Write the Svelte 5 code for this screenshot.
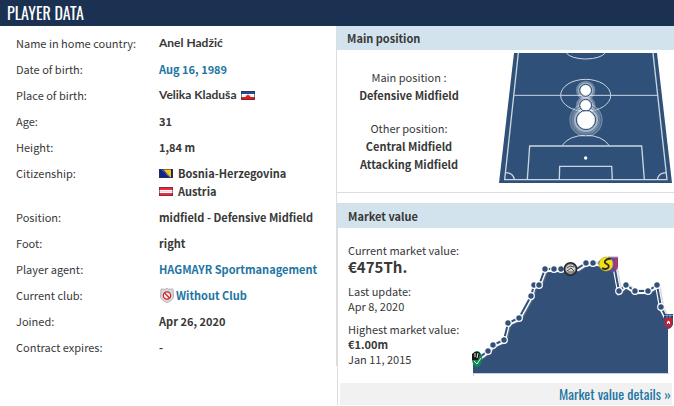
<script lang="ts">
	type Flag = 'yugoslavia' | 'bosnia' | 'austria';

	interface Value {
		text: string;
		href?: string;
		flag?: Flag;
		flagAfter?: boolean;
		noClub?: boolean;
		accented?: boolean;
	}

	const rows: { label: string; values: Value[] }[] = [
		{ label: 'Name in home country:', values: [{ text: 'Anel Hadžić', accented: true }] },
		{ label: 'Date of birth:', values: [{ text: 'Aug 16, 1989', href: '#birthday' }] },
		{ label: 'Place of birth:', values: [{ text: 'Velika Kladuša', flag: 'yugoslavia', flagAfter: true, accented: true }] },
		{ label: 'Age:', values: [{ text: '31' }] },
		{ label: 'Height:', values: [{ text: '1,84 m' }] },
		{
			label: 'Citizenship:',
			values: [
				{ text: 'Bosnia-Herzegovina', flag: 'bosnia' },
				{ text: 'Austria', flag: 'austria' }
			]
		},
		{ label: 'Position:', values: [{ text: 'midfield - Defensive Midfield' }] },
		{ label: 'Foot:', values: [{ text: 'right' }] },
		{ label: 'Player agent:', values: [{ text: 'HAGMAYR Sportmanagement', href: '#agent' }] },
		{ label: 'Current club:', values: [{ text: 'Without Club', href: '#club', noClub: true }] },
		{ label: 'Joined:', values: [{ text: 'Apr 26, 2020' }] },
		{ label: 'Contract expires:', values: [{ text: '-' }] }
	];

	// Market value history, in chart units; club marks a transfer
	const history: { x: number; y: number; club?: boolean }[] = [
		{ x: 5, y: 105, club: true },
		{ x: 16, y: 97 },
		{ x: 21, y: 91 },
		{ x: 32, y: 86 },
		{ x: 36, y: 69 },
		{ x: 47, y: 64 },
		{ x: 59, y: 42 },
		{ x: 62, y: 31 },
		{ x: 67, y: 31 },
		{ x: 73, y: 15 },
		{ x: 82, y: 15 },
		{ x: 89, y: 15 },
		{ x: 98, y: 15, club: true },
		{ x: 106, y: 14 },
		{ x: 114, y: 9 },
		{ x: 121, y: 9 },
		{ x: 129, y: 9 },
		{ x: 134, y: 10, club: true },
		{ x: 142, y: 10, club: true },
		{ x: 147, y: 37 },
		{ x: 154, y: 31 },
		{ x: 163, y: 37 },
		{ x: 176, y: 37 },
		{ x: 185, y: 31 },
		{ x: 189, y: 53 },
		{ x: 196, y: 67, club: true }
	];

	const line = history.map((p) => `${p.x},${p.y}`).join(' ');
	const area = `1,119 1,107 ${line} 196,119`;
	const dots = history.filter((p) => !p.club && p.x !== 106);
</script>

{#snippet flagIcon(flag: Flag)}
	<svg class="flag" viewBox="0 0 14 9" aria-hidden="true">
		{#if flag === 'yugoslavia'}
			<rect width="14" height="9" fill="#fff" />
			<rect width="14" height="3" fill="#1c4ba0" />
			<rect y="6" width="14" height="3" fill="#e01c1c" />
			<path d="M7 3l.8 1.500 2 .3-1.300 1.400H5.500L4.200 4.800l2-.3z" fill="#e01c1c" />
		{:else if flag === 'bosnia'}
			<rect width="14" height="9" fill="#10258c" />
			<path d="M4 0h8v9z" fill="#f7c90e" />
			<path d="M2.500 0l9 9" stroke="#b9c2e6" stroke-width="1" stroke-dasharray="1 .8" />
		{:else}
			<rect width="14" height="9" fill="#ee2b40" />
			<rect y="3" width="14" height="3" fill="#fff" />
			<path d="M1 4.500h12" stroke="#f6b5bd" stroke-width=".6" />
		{/if}
		<rect x=".5" y=".5" width="13" height="8" fill="none" stroke="#333" stroke-opacity=".6" />
	</svg>
{/snippet}

<section class="player">
	<h1>Player data</h1>
	<div class="columns">
		<div class="facts">
			<table>
				<tbody>
					{#each rows as row}
						<tr>
							<th scope="row">{row.label}</th>
							<td>
								{#each row.values as value}
									<div class="value">
										{#if value.flag && !value.flagAfter}{@render flagIcon(value.flag)}{/if}
										{#if value.noClub}
											<svg class="shield" viewBox="0 0 14 15" aria-hidden="true">
												<path d="M7 .5l2 .8 4-.3.500 7C13.500 11.500 10 13.500 7 14.500 4 13.500.500 11.500.500 8L1 1l4 .3z" fill="#d9d9d9" stroke="#b5b5b5" />
												<circle cx="7" cy="7.500" r="3.700" fill="#eee" stroke="#d9202a" stroke-width="1.300" />
												<path d="M4.500 5l5 5" stroke="#d9202a" stroke-width="1.300" />
											</svg>
										{/if}
										{#if value.href}
											<a href={value.href}>{value.text}</a>
										{:else}
											<span class:accented={value.accented}>{value.text}</span>
										{/if}
										{#if value.flag && value.flagAfter}{@render flagIcon(value.flag)}{/if}
									</div>
								{/each}
							</td>
						</tr>
					{/each}
				</tbody>
			</table>
		</div>

		<div class="side">
			<section class="position">
				<h2>Main position</h2>
				<div class="position-body">
					<div class="position-list">
						<p>Main position :<br /><strong>Defensive Midfield</strong></p>
						<p>Other position:<br /><strong>Central Midfield</strong><br /><strong>Attacking Midfield</strong></p>
					</div>
					<svg class="pitch" viewBox="12 24 519 390" role="img" aria-label="Positions on the pitch">
						<path d="M57 24H486L531 414H12z" fill="#2f5078" />
						<g fill="none" stroke="#cbd6e0" stroke-width="4">
							<path d="M70 24L29 404H516L474 24" />
							<path d="M58 151H486" stroke-width="3" />
							<ellipse cx="272" cy="151" rx="75" ry="48" stroke-width="3" />
							<path d="M214 24Q228 41 272 42Q316 41 331 24" stroke-width="3" />
							<path d="M97 403L104 303H440L448 403" />
							<path d="M193 403L194 364H350L352 403" />
							<path d="M201 302Q222 271 272 271Q322 271 343 302" stroke-width="3" />
							<path d="M31 383Q54 383 58 403M514 383Q491 383 487 403" />
						</g>
						<circle cx="272" cy="339" r="5" fill="#fff" />
						<g fill="#fff">
							<g fill-opacity=".32">
								<circle cx="272" cy="136" r="29" />
								<circle cx="272" cy="181" r="29" />
								<circle cx="273" cy="225" r="50" />
							</g>
							<g fill-opacity=".4">
								<circle cx="272" cy="136" r="23" />
								<circle cx="272" cy="181" r="23" />
								<circle cx="273" cy="225" r="39" />
							</g>
							<g fill="none" stroke="#2f5078" stroke-width="3">
								<circle cx="273" cy="225" r="45" stroke-opacity=".6" />
								<circle cx="273" cy="225" r="38" stroke-opacity=".6" />
								<circle cx="272" cy="136" r="18" />
								<circle cx="272" cy="181" r="18" />
								<circle cx="273" cy="225" r="29" />
							</g>
							<circle cx="272" cy="136" r="15" />
							<circle cx="272" cy="181" r="15" />
							<circle cx="273" cy="225" r="26" />
						</g>
					</svg>
				</div>
			</section>

			<section class="market">
				<h2>Market value</h2>
				<div class="market-body">
					<div class="market-text">
						<p>Current market value:<strong class="current">€475Th.</strong></p>
						<p>Last update:<br />Apr 8, 2020</p>
						<p>Highest market value:<br /><strong>€1.00m</strong><br />Jan 11, 2015</p>
					</div>
					<svg class="chart" viewBox="0 0 202 124" role="img" aria-label="Market value history">
						<polygon points={area} fill="#325078" />
						<path d="M1.500 122V119.500H197" fill="none" stroke="#c0d0e0" />
						<polyline points={line} fill="none" stroke="#999" stroke-opacity=".35" stroke-width="5" transform="translate(1 1)" />
						<polyline points={line} fill="none" stroke="#fff" stroke-width="4" transform="translate(0 1)" />
						<polyline points={line} fill="none" stroke="#325078" stroke-width="2" />
						{#each dots as p}
							<circle cx={p.x} cy={p.y} r="3.300" fill="#325078" stroke="#fff" stroke-width="1.200" />
						{/each}
						<!-- Club crests -->
						<g>
							<ellipse cx="5" cy="105" rx="5" ry="8" fill="#0c8b55" />
							<path d="M0 106V100Q4 96 8 99L6 106z" fill="#171717" />
							<path d="M3 99v4M6 99l-1 5M2 107l3 3 4-6" fill="none" stroke="#e5eee9" />
						</g>
						<g>
							<circle cx="98.500" cy="15" r="7" fill="#292929" />
							<circle cx="98.500" cy="15" r="5" fill="#d9d9d9" stroke="#777" />
							<path d="M95 14l3-2 4 1M95 17l4-3 3 3M96 18h6" fill="none" stroke="#444" />
						</g>
						<g>
							<path d="M136 3h10v10q-1 4-5 5-4-1-5-4z" fill="#6947a1" />
							<path d="M138 4v12M144 4v11" stroke="#cc3153" stroke-width="2" />
							<path d="M136 3h10" stroke="#c7a2bc" />
							<circle cx="134" cy="10" r="7" fill="#f2df15" stroke="#b1a51f" stroke-width=".6" />
							<path d="M139 5q-4-1-6 2-1 2 2 3 3 2 1 4-3 2-6 0" fill="none" stroke="#292d24" stroke-width="1.800" />
						</g>
						<g>
							<path d="M192 60h9v10q-1 4-4.500 5Q193 74 192 70z" fill="#c32037" />
							<path d="M192 60h9v4h-9z" fill="#27416f" />
							<path d="M192.500 64v6q1 3 4 4M200.500 64v6q-1 3-4 4" fill="none" stroke="#454d78" />
							<path d="M192 61.500h9M195 60v4M198 60v4" stroke="#a4b0c5" stroke-width=".7" />
							<path d="M195 70v-2l1.500-1.500L198 68v2h-1v-1h-1v1z" fill="#fff" />
						</g>
					</svg>
				</div>
				<footer><a href="#market-value">Market value details »</a></footer>
			</section>
		</div>
	</div>
</section>

<style>
	:global(body) {
		margin: 0;
		background: #fff;
	}

	.player {
		font-family: 'Noto Sans CJK SC', 'Open Sans', sans-serif;
		font-size: 11px;
		line-height: 18px;
		color: #383838;
	}

	h1,
	h2,
	p {
		margin: 0;
	}

	h1 {
		padding: 0 7px;
		background: #1a3151;
		color: #fff;
		font-family: Oswald, 'Liberation Sans Narrow', 'Roboto Condensed', sans-serif;
		font-size: 16px;
		font-weight: 400;
		line-height: 26px;
		text-transform: uppercase;
	}

	h2 {
		padding: 0 10px;
		background: #d3e3ed;
		font-size: 11px;
		font-weight: 700;
		line-height: 24px;
	}

	a {
		color: #1d75a3;
		text-decoration: none;
	}

	.columns {
		display: grid;
		grid-template-columns: 1fr 1fr;
		align-items: start;
	}

	.facts {
		padding: 4px 0 6px;
		border-right: 1px solid #ddd;
	}

	table {
		width: 100%;
		border-collapse: collapse;
	}

	th,
	td {
		padding: 4px 0;
		text-align: left;
		vertical-align: top;
	}

	th {
		width: 143px;
		padding-left: 16px;
		font-weight: 400;
	}

	td {
		font-weight: 700;
	}

	.value {
		display: flex;
		align-items: center;
		gap: 5px;
		white-space: nowrap;
	}

	.accented {
		font-family: Lato, 'Open Sans', sans-serif;
		font-size: 12px;
	}

	.flag {
		width: 14px;
		height: 9px;
	}

	.shield {
		width: 14px;
		height: 15px;
		margin-right: -3px;
		margin-left: 1px;
	}

	.position {
		border-bottom: 1px solid #ddd;
	}

	.position-body {
		display: grid;
		grid-template-columns: 1fr 173px;
		gap: 18px;
		padding: 3px 2px 9px 0;
	}

	.position-list {
		display: flex;
		flex-direction: column;
		gap: 15px;
		padding-top: 15px;
		text-align: center;
	}

	.pitch {
		display: block;
		width: 173px;
		height: 130px;
	}

	.market {
		margin-top: 10px;
		border-top: 1px solid #ddd;
		border-left: 1px solid #ddd;
	}

	.market-body {
		display: grid;
		grid-template-columns: 1fr 202px;
		padding: 15px 0 5px;
	}

	.market-text {
		display: flex;
		flex-direction: column;
		gap: 8px;
		padding-left: 10px;
		line-height: 15px;
		white-space: nowrap;
	}

	.current {
		display: block;
		font-size: 15px;
		line-height: 18px;
	}

	.chart {
		display: block;
		width: 202px;
		height: 124px;
		margin-top: 11px;
	}

	footer {
		margin: 0 2px;
		padding: 0 1px;
		background: #f1f1f1;
		font-family: Oswald, 'Liberation Sans Narrow', 'Roboto Condensed', sans-serif;
		font-size: 14px;
		line-height: 22px;
		text-align: right;
	}
</style>
